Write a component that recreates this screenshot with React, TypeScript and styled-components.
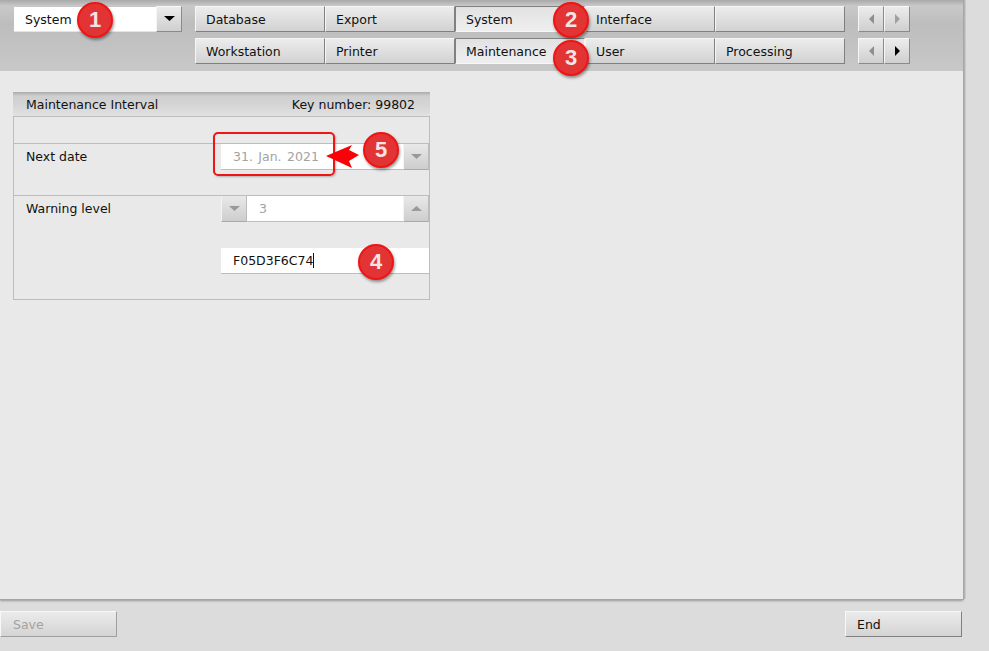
import React from "react";
import styled, { createGlobalStyle } from "styled-components";

const GlobalStyle = createGlobalStyle`
  html, body {
    margin: 0;
    padding: 0;
    background: #dcdcdc;
  }
  body {
    font-family: "DejaVu Sans", "Noto Sans", sans-serif;
    font-size: 12.5px;
    color: #111;
  }
`;

const Page = styled.div`
  position: relative;
  width: 989px;
  height: 651px;
  overflow: hidden;
  display: flex;
  flex-direction: column;
`;

const Main = styled.main`
  width: 963px;
  height: 599px;
  background: #e9e9e9;
  box-shadow: 1px 0 0 #a6a6a6, 2px 0 0 #b4b4b4, 3px 0 0 #c8c8c8, 0 1px 0 #a6a6a6, 1px 1px 0 #a6a6a6, 0 2px 2px #999;
  display: flex;
  flex-direction: column;
`;

const Header = styled.header`
  height: 71px;
  box-sizing: border-box;
  padding: 6px 0 0 14px;
  background: linear-gradient(to bottom, #a9a9a9 0, #c9c9c9 6px, #bdbdbd 24px, #c8c8c8 100%);
  display: flex;
  align-items: flex-start;
`;

const SelectBox = styled.div`
  display: flex;
  width: 168px;
  height: 26px;
  margin-right: 13px;
`;

const SelectValue = styled.div`
  flex: 1;
  margin-top: 1px;
  background: #fff;
  line-height: 25px;
  padding-left: 11px;
  border-bottom: 1px solid #e4e4e4;
`;

const ArrowButton = styled.div`
  width: 26px;
  height: 26px;
  box-sizing: border-box;
  display: flex;
  align-items: center;
  justify-content: center;
  padding-bottom: 1px;
  background: linear-gradient(to bottom, #ececec, #cfcfcf);
  border-top: 1px solid #f6f6f6;
  border-left: 1px solid #f6f6f6;
  border-right: 1px solid #8a8a8a;
  border-bottom: 1px solid #8a8a8a;
`;

const Triangle = styled.svg<{ $color: string }>`
  fill: ${(p) => p.$color};
  display: block;
`;

const TabGrid = styled.div`
  display: grid;
  grid-template-columns: repeat(5, 130px);
  grid-auto-rows: 26px;
  row-gap: 6px;
`;

const Tab = styled.div<{ $active?: boolean }>`
  box-sizing: border-box;
  height: 26px;
  padding-left: 10px;
  line-height: 26px;
  background: ${(p) =>
    p.$active
      ? "linear-gradient(to bottom, #e2e2e2, #efefef)"
      : "linear-gradient(to bottom, #ececec, #d2d2d2)"};
  border-top: 1px solid ${(p) => (p.$active ? "#808080" : "#f6f6f6")};
  border-left: 1px solid ${(p) => (p.$active ? "#808080" : "#f6f6f6")};
  border-right: 1px solid ${(p) => (p.$active ? "#f6f6f6" : "#808080")};
  border-bottom: 1px solid ${(p) => (p.$active ? "#f6f6f6" : "#808080")};
`;

const NavColumn = styled.div`
  display: grid;
  grid-template-columns: 26px 26px;
  grid-auto-rows: 26px;
  row-gap: 6px;
  margin-left: 13px;
`;

const Content = styled.div`
  flex: 1;
  padding: 21px 0 0 13px;
`;

const Panel = styled.section`
  width: 417px;
  box-sizing: border-box;
  border: 1px solid #bdbdbd;
  border-top: 0;
`;

const PanelTitle = styled.div`
  height: 25px;
  margin: 0 -1px;
  box-sizing: border-box;
  padding: 0 15px 0 13px;
  display: flex;
  justify-content: space-between;
  align-items: center;
  background: linear-gradient(to bottom, #ababab 0, #cfcfcf 4px, #d6d6d6 60%, #e2e2e2 100%);
  border-bottom: 1px solid #bdbdbd;
`;

const Row = styled.div<{ $h: number }>`
  height: ${(p) => p.$h}px;
  box-sizing: border-box;
  display: flex;
  border-bottom: 1px solid #bdbdbd;
  &:last-child {
    border-bottom: 0;
  }
`;

const Label = styled.div`
  width: 207px;
  padding-left: 12px;
  box-sizing: border-box;
  line-height: 25px;
`;

const FieldColumn = styled.div`
  width: 208px;
  display: flex;
  flex-direction: column;
  gap: 26px;
`;

const Field = styled.div`
  display: flex;
  height: 26px;
  background: #fff;
  box-sizing: border-box;
  border-bottom: 1px solid #bdbdbd;
`;

const FieldText = styled.div<{ $muted?: boolean }>`
  flex: 1;
  padding-left: 12px;
  line-height: 25px;
  word-spacing: 1.5px;
  color: ${(p) => (p.$muted ? "#a3a3a3" : "#111")};
`;

const Caret = styled.span`
  display: inline-block;
  width: 1px;
  height: 15px;
  background: #111;
  vertical-align: -3px;
`;

const FieldButton = styled.div`
  width: 26px;
  height: 26px;
  box-sizing: border-box;
  display: flex;
  align-items: center;
  justify-content: center;
  background: linear-gradient(to bottom, #e9e9e9, #cdcdcd);
  border-left: 1px solid #f4f4f4;
  border-right: 1px solid #bbb;
  border-bottom: 1px solid #aaa;
`;

const Footer = styled.footer`
  width: 962px;
  margin-top: 12px;
  display: flex;
  justify-content: space-between;
`;

const FooterButton = styled.div<{ $disabled?: boolean }>`
  width: 117px;
  height: 26px;
  box-sizing: border-box;
  padding-left: ${(p) => (p.$disabled ? 12 : 11)}px;
  line-height: 26px;
  color: ${(p) => (p.$disabled ? "#a3a3a3" : "#111")};
  background: linear-gradient(to bottom, #ebebeb, #d4d4d4);
  border-top: 1px solid #f8f8f8;
  border-left: 1px solid #f8f8f8;
  border-right: 1px solid ${(p) => (p.$disabled ? "#a0a0a0" : "#808080")};
  border-bottom: 1px solid ${(p) => (p.$disabled ? "#a0a0a0" : "#808080")};
`;

const Badge = styled.div<{ $x: number; $y: number }>`
  position: absolute;
  left: ${(p) => p.$x - 18}px;
  top: ${(p) => p.$y - 18}px;
  width: 36px;
  height: 36px;
  box-sizing: border-box;
  border-radius: 50%;
  border: 2px solid #f01414;
  background: #e23434;
  color: #f4e4e4;
  font-family: "Liberation Sans", Arial, sans-serif;
  font-size: 22px;
  font-weight: 700;
  line-height: 32px;
  text-align: center;
  box-shadow: 1px 2px 3px rgba(0, 0, 0, 0.4);
`;

const Highlight = styled.div`
  position: absolute;
  left: 213px;
  top: 132px;
  width: 122px;
  height: 44px;
  box-sizing: border-box;
  border: 2px solid #f01414;
  border-radius: 5px;
  box-shadow: 1px 1px 2px rgba(0, 0, 0, 0.25);
`;

const Pointer = styled.svg`
  position: absolute;
  left: 326px;
  top: 144px;
  fill: #fb0007;
`;

const Down = ({ color }: { color: string }) => (
  <Triangle $color={color} width="11" height="5" viewBox="0 0 11 5">
    <path d="M0 0h11L5.5 5z" />
  </Triangle>
);
const Up = ({ color }: { color: string }) => (
  <Triangle $color={color} width="11" height="5" viewBox="0 0 11 5">
    <path d="M0 5h11L5.5 0z" />
  </Triangle>
);
const Left = ({ color }: { color: string }) => (
  <Triangle $color={color} width="5" height="10" viewBox="0 0 5 10">
    <path d="M5 0v10L0 5z" />
  </Triangle>
);
const Right = ({ color }: { color: string }) => (
  <Triangle $color={color} width="5" height="10" viewBox="0 0 5 10">
    <path d="M0 0v10l5-5z" />
  </Triangle>
);

const tabs = [
  { name: "Database" },
  { name: "Export" },
  { name: "System", active: true },
  { name: "Interface" },
  { name: "" },
  { name: "Workstation" },
  { name: "Printer" },
  { name: "Maintenance", active: true },
  { name: "User" },
  { name: "Processing" },
];

const badges = [
  { n: 1, x: 95, y: 20 },
  { n: 2, x: 571, y: 20 },
  { n: 3, x: 571, y: 58 },
  { n: 4, x: 376, y: 262 },
  { n: 5, x: 381, y: 150 },
];

const App: React.FC = () => {
  return (
    <Page>
      <GlobalStyle />
      <Main>
        <Header>
          <SelectBox>
            <SelectValue>System</SelectValue>
            <ArrowButton>
              <Down color="#000" />
            </ArrowButton>
          </SelectBox>
          <TabGrid>
            {tabs.map((t, i) => (
              <Tab key={i} $active={t.active}>
                {t.name}
              </Tab>
            ))}
          </TabGrid>
          <NavColumn>
            <ArrowButton>
              <Left color="#8f8f8f" />
            </ArrowButton>
            <ArrowButton>
              <Right color="#a0a0a0" />
            </ArrowButton>
            <ArrowButton>
              <Left color="#8f8f8f" />
            </ArrowButton>
            <ArrowButton>
              <Right color="#000" />
            </ArrowButton>
          </NavColumn>
        </Header>
        <Content>
          <Panel>
            <PanelTitle>
              <span>Maintenance Interval</span>
              <span>Key number: 99802</span>
            </PanelTitle>
            <Row $h={27} />
            <Row $h={52}>
              <Label>Next date</Label>
              <FieldColumn>
                <Field>
                  <FieldText $muted>31. Jan. 2021</FieldText>
                  <FieldButton>
                    <Down color="#999" />
                  </FieldButton>
                </Field>
              </FieldColumn>
            </Row>
            <Row $h={103}>
              <Label>Warning level</Label>
              <FieldColumn>
                <Field>
                  <FieldButton>
                    <Down color="#999" />
                  </FieldButton>
                  <FieldText $muted>3</FieldText>
                  <FieldButton>
                    <Up color="#999" />
                  </FieldButton>
                </Field>
                <Field>
                  <FieldText>
                    F05D3F6C74
                    <Caret />
                  </FieldText>
                </Field>
              </FieldColumn>
            </Row>
          </Panel>
        </Content>
      </Main>
      <Footer>
        <FooterButton $disabled>Save</FooterButton>
        <FooterButton>End</FooterButton>
      </Footer>
      <Highlight />
      <Pointer width="34" height="26" viewBox="0 0 34 26">
        <path d="M0 12 L26 1 L23 6 L33 11 L23 17 L26 24 Z" />
      </Pointer>
      {badges.map((b) => (
        <Badge key={b.n} $x={b.x} $y={b.y}>
          {b.n}
        </Badge>
      ))}
    </Page>
  );
};

export default App;
